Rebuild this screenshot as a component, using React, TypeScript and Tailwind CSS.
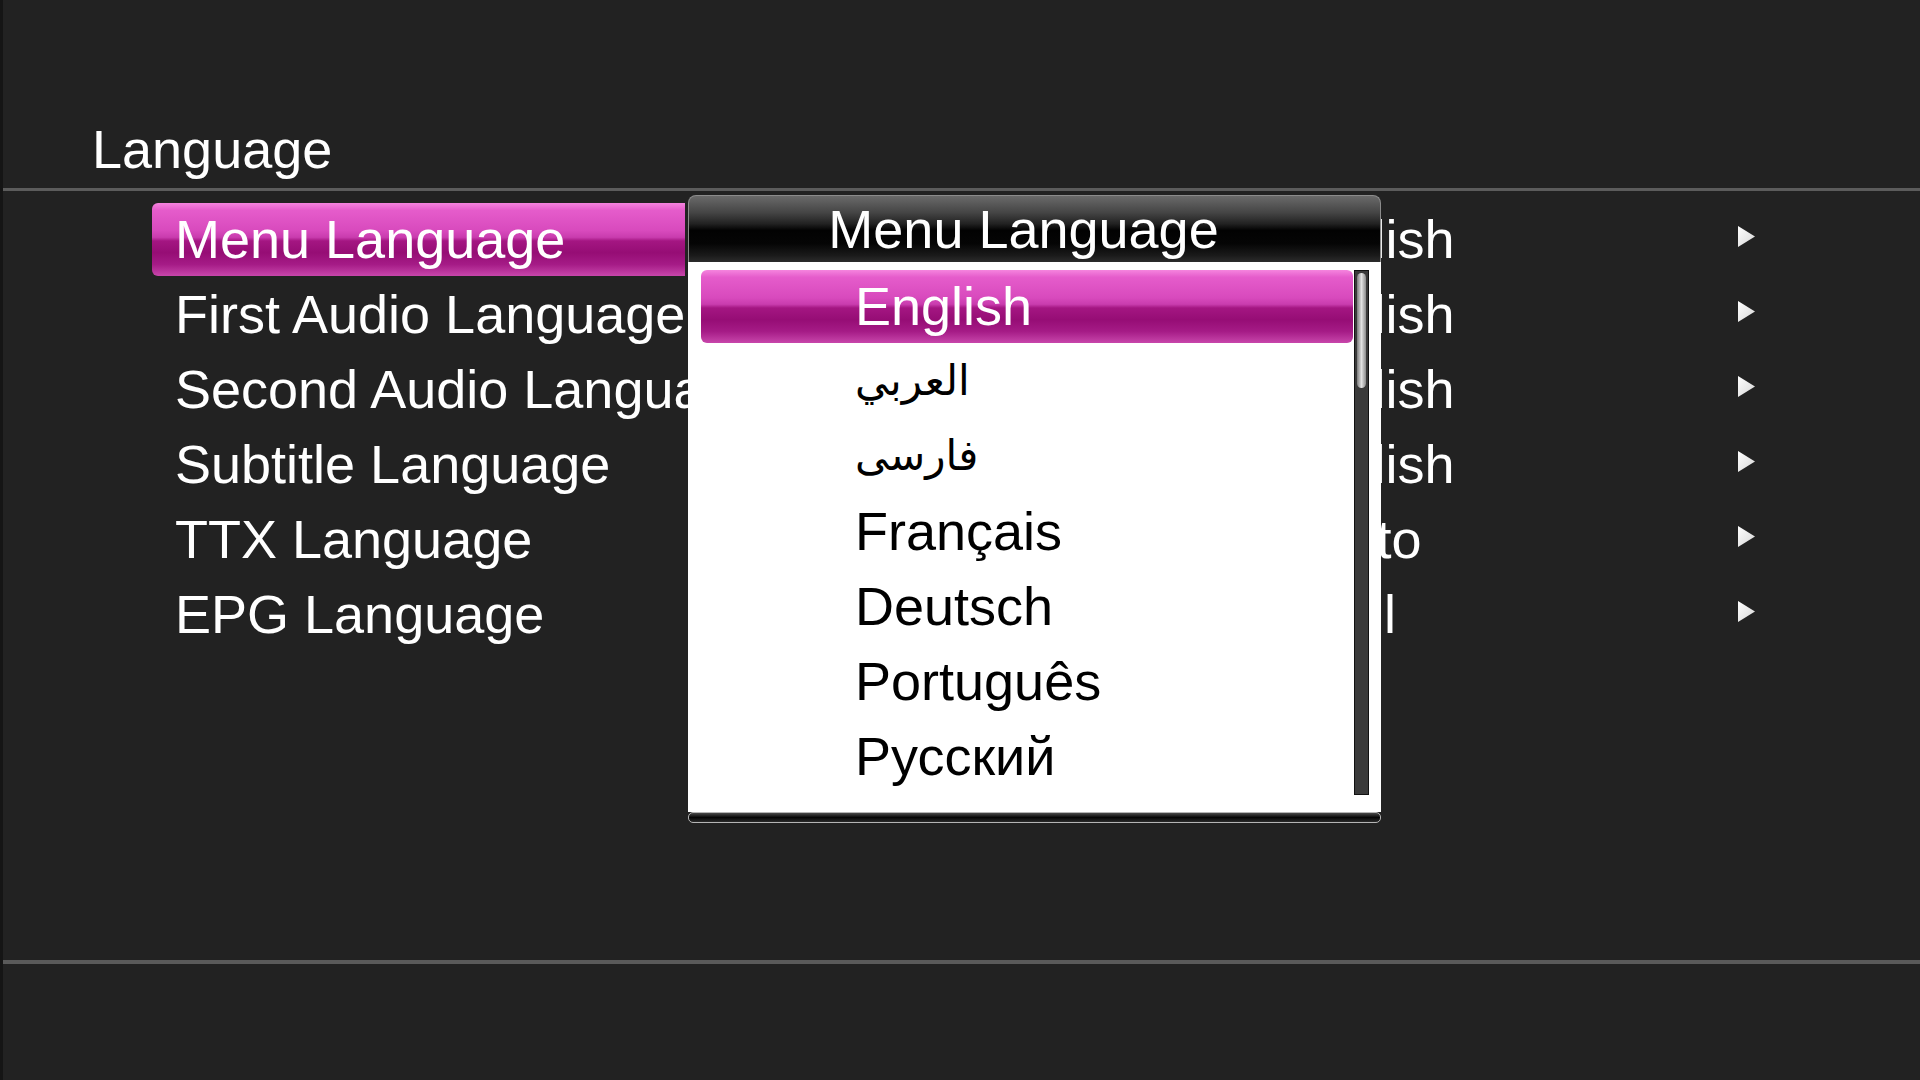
import React from "react";

const rows = [
  { label: "Menu Language", value: "English" },
  { label: "First Audio Language", value: "English" },
  { label: "Second Audio Language", value: "English" },
  { label: "Subtitle Language", value: "English" },
  { label: "TTX Language", value: "Auto" },
  { label: "EPG Language", value: "All" },
];

const options = [
  { name: "English", rtl: false },
  { name: "العربي", rtl: true },
  { name: "فارسی", rtl: true },
  { name: "Français", rtl: false },
  { name: "Deutsch", rtl: false },
  { name: "Português", rtl: false },
  { name: "Русский", rtl: false },
];

const pinkBar =
  "bg-[linear-gradient(to_bottom,#f584de_0%,#e55ccb_10%,#d84abd_38%,#c93cae_47%,#a41682_52%,#960d75_68%,#a51b86_84%,#c846ab_100%)]";

function Arrow() {
  return (
    <svg width="19" height="23" viewBox="0 0 19 23" className="mb-[6px]">
      <defs>
        <linearGradient id="arr" x1="0" y1="0" x2="1" y2="1">
          <stop offset="0" stopColor="#ffffff" />
          <stop offset="1" stopColor="#d6d6d6" />
        </linearGradient>
      </defs>
      <polygon points="1,1 18,11.5 1,22" fill="url(#arr)" />
    </svg>
  );
}

function LanguagePopup() {
  return (
    <div className="absolute left-[688px] top-[195px] w-[693px] flex flex-col">
      <div className="h-[67px] rounded-t-[8px] border border-b-0 border-[#8c8c8c] bg-[linear-gradient(to_bottom,#6a6a6a_0%,#454545_25%,#222222_42%,#020202_52%,#050505_72%,#1a1a1a_90%,#2c2c2c_100%)] flex items-center justify-center pr-[22px]">
        <span className="text-[54px] leading-none text-white whitespace-nowrap">Menu Language</span>
      </div>
      <div className="bg-white h-[550px] flex pl-[13px] pt-[8px]">
        <div className="w-[652px] flex flex-col gap-[2px]">
          {options.map((o, i) => (
            <div
              key={o.name}
              className={
                "h-[73px] flex items-center pl-[154px] " +
                (i === 0 ? pinkBar + " rounded-[6px] text-white" : "text-black")
              }
            >
              {o.rtl ? (
                <span dir="rtl" className="text-[42px] leading-none pb-[2px] font-['DejaVu_Sans',sans-serif]">
                  {o.name}
                </span>
              ) : (
                <span className="text-[54px] leading-[73px] whitespace-nowrap">{o.name}</span>
              )}
            </div>
          ))}
        </div>
        <div className="ml-[1px] w-[15px] h-[525px] bg-[#3a3a3a] border border-[#111111] p-[2px]">
          <div className="h-[115px] rounded-full bg-[linear-gradient(to_right,#7a7a7a,#e2e2e2_50%,#8a8a8a)]" />
        </div>
      </div>
      <div className="h-[11px] rounded-[5px] border border-[#b5b5b5] bg-[linear-gradient(to_bottom,#4a4a4a,#050505_50%,#2a2a2a)]" />
    </div>
  );
}

export default function App() {
  return (
    <div className="relative w-[1920px] h-[1080px] overflow-hidden bg-[#222222] font-['Liberation_Sans',Arial,sans-serif] text-white">
      <div className="absolute left-0 top-0 h-full w-[3px] bg-[#151515]" />
      <div className="pt-[113px]">
        <div className="h-[73px] pl-[92px] text-[54px] leading-[73px]">Language</div>
        <div className="mt-[2px] ml-[3px] h-[3px] bg-[#5c5c5c]" />
        <div className="mt-[12px] h-[757px] pl-[152px] flex flex-col gap-[2px]">
          {rows.map((r, i) => (
            <div key={r.label} className="h-[73px] flex items-center">
              <div className="w-[1064px] h-full">
                <div
                  className={
                    "w-[533px] h-full pl-[23px] text-[54px] leading-[73px] whitespace-nowrap " +
                    (i === 0 ? pinkBar + " rounded-l-[6px]" : "")
                  }
                >
                  {r.label}
                </div>
              </div>
              <div className="w-[300px] text-center text-[54px] leading-[73px] whitespace-nowrap">{r.value}</div>
              <div className="ml-[221px]">
                <Arrow />
              </div>
            </div>
          ))}
        </div>
        <div className="ml-[3px] h-[4px] bg-[#5a5a5a]" />
      </div>
      <LanguagePopup />
    </div>
  );
}
